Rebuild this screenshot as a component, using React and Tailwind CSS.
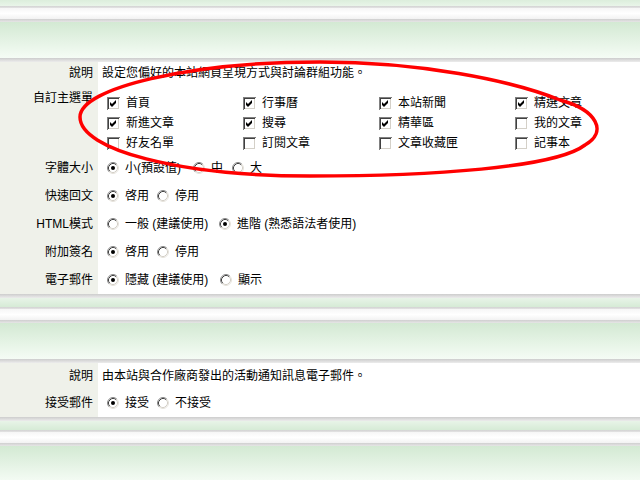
const font = "font-['Liberation_Sans','Noto_Sans_CJK_TC',sans-serif]"

function Checkbox({ on }) {
  return (
    <svg width="13" height="13" viewBox="0 0 13 13" className="shrink-0" shapeRendering="crispEdges">
      <rect x="0" y="0" width="13" height="13" fill="#fff" />
      <path d="M0.5 12.5V0.5H12.5" stroke="#808080" fill="none" />
      <path d="M1.5 11.5V1.5H11.5" stroke="#404040" fill="none" />
      <path d="M1.5 11.5H11.5V1.5" stroke="#d4d0c8" fill="none" />
      {on && <polygon points="3,5 5,7 9,3 9,6 5,10 3,8" fill="#000" shapeRendering="auto" />}
    </svg>
  )
}

function Radio({ on }) {
  return (
    <svg width="12" height="12" viewBox="0 0 12 12" className="shrink-0">
      <circle cx="6" cy="6" r="5.5" fill="#fff" />
      <path d="M2.11 9.89A5.5 5.5 0 0 1 9.89 2.11" stroke="#8a8a8a" fill="none" />
      <path d="M9.89 2.11A5.5 5.5 0 0 1 2.11 9.89" stroke="#e6e3dc" fill="none" />
      <path d="M2.82 9.18A4.5 4.5 0 0 1 9.18 2.82" stroke="#404040" fill="none" />
      <path d="M9.18 2.82A4.5 4.5 0 0 1 2.82 9.18" stroke="#d4d0c8" fill="none" />
      {on && <circle cx="6" cy="6" r="2" fill="#000" />}
    </svg>
  )
}

const Shadow = () => <div className="h-[4px] bg-gradient-to-b from-[#cdcdcd] to-[#ececec]" />
const Rule = ({ h }) => <div className={h === 3 ? 'h-[3px] bg-gradient-to-b from-[#cfcfcf] to-[#e6e6e6]' : 'h-[2px] bg-gradient-to-b from-[#d2d2d2] to-[#e4e4e4]'} />
const WhiteBand = () => <div className="h-[11px] bg-gradient-to-b from-[#f6f6f6] via-white to-[#f2f2f2]" />
const Header = () => <div className="h-[36px] shrink-0 bg-gradient-to-b from-[#d3e9d3] to-[#f5fcf5]" />
const Strip = ({ h }) => <div className={h === 6 ? 'h-[6px] bg-gradient-to-b from-[#dceedc] to-[#e9f5e9]' : 'h-[9px] bg-gradient-to-b from-[#e8f4e8] to-[#d6ebd6]'} />

function Divider() {
  return (
    <>
      <Shadow />
      <Strip h={9} />
      <Rule h={2} />
      <WhiteBand />
      <Rule h={3} />
      <Header />
      <Shadow />
    </>
  )
}

function Row({ label, h, top, children }) {
  return (
    <div className={clsxRow(h, top)}>
      <div className={top ? 'w-[98px] shrink-0 bg-[#eff1ea] pr-[5px] pt-[6px] text-right' : 'w-[98px] shrink-0 self-stretch flex items-center justify-end bg-[#eff1ea] pr-[5px]'}>
        {label}
      </div>
      {children}
    </div>
  )
}

function clsxRow(h, top) {
  return (top ? 'flex items-start ' : 'flex items-center ') + h
}

const menu = [
  ['首頁', true], ['行事曆', true], ['本站新聞', true], ['精選文章', true],
  ['新進文章', true], ['搜尋', true], ['精華區', true], ['我的文章', false],
  ['好友名單', false], ['訂閱文章', false], ['文章收藏匣', false], ['記事本', false],
]

function Options({ items }) {
  return (
    <div className="flex items-center pl-[9px]">
      {items.map(([text, on, w]) => (
        <div key={text} className={'flex items-center gap-[6px] ' + w}>
          <Radio on={on} />
          <span className="whitespace-nowrap">{text}</span>
        </div>
      ))}
    </div>
  )
}

export default function App() {
  return (
    <div className={'relative w-[640px] h-[480px] overflow-hidden bg-white text-[12px] leading-[16px] text-black ' + font}>
      <Strip h={6} />
      <Rule h={2} />
      <WhiteBand />
      <Rule h={3} />
      <Header />
      <Shadow />

      <Row label="說明" h="h-[22px]">
        <div className="pl-[4px]">設定您偏好的本站網頁呈現方式與討論群組功能。</div>
      </Row>
      <Row label="自訂主選單" h="h-[70px] bg-[#eff1ea]" top>
        <div className="self-stretch flex-1 bg-white pt-[9px]">
          <div className="ml-[9px] grid grid-cols-[136px_136px_136px_136px] auto-rows-[20px]">
            {menu.map(([text, on]) => (
              <div key={text} className="flex items-center gap-[6px]">
                <Checkbox on={on} />
                <span>{text}</span>
              </div>
            ))}
          </div>
        </div>
      </Row>
      <Row label="字體大小" h="h-[28px]">
        <Options items={[['小(預設值)', true, 'w-[86px]'], ['中', false, 'w-[39px]'], ['大', false, 'w-[40px]']]} />
      </Row>
      <Row label="快速回文" h="h-[28px]">
        <Options items={[['啓用', true, 'w-[50px]'], ['停用', false, 'w-[50px]']]} />
      </Row>
      <Row label="HTML模式" h="h-[28px]">
        <Options items={[['一般 (建議使用)', false, 'w-[112px]'], ['進階 (熟悉語法者使用)', true, 'w-[140px]']]} />
      </Row>
      <Row label="附加簽名" h="h-[28px]">
        <Options items={[['啓用', true, 'w-[50px]'], ['停用', false, 'w-[50px]']]} />
      </Row>
      <Row label="電子郵件" h="h-[28px]">
        <Options items={[['隱藏 (建議使用)', true, 'w-[113px]'], ['顯示', false, 'w-[50px]']]} />
      </Row>

      <Divider />

      <Row label="說明" h="h-[26px]">
        <div className="pl-[4px]">由本站與合作廠商發出的活動通知訊息電子郵件。</div>
      </Row>
      <Row label="接受郵件" h="h-[28px]">
        <Options items={[['接受', true, 'w-[50px]'], ['不接受', false, 'w-[60px]']]} />
      </Row>

      <Divider />

      <svg className="pointer-events-none absolute left-0 top-0" width="640" height="480" viewBox="0 0 640 480">
        <path
          d="M80 117C80 88 190 62 320 62C420 62 510 80 560 100C597 110 608 132 585 145C555 168 430 176 310 176C180 176 80 150 80 117Z"
          fill="none"
          stroke="#ff0000"
          strokeWidth="3.5"
        />
      </svg>
    </div>
  )
}
